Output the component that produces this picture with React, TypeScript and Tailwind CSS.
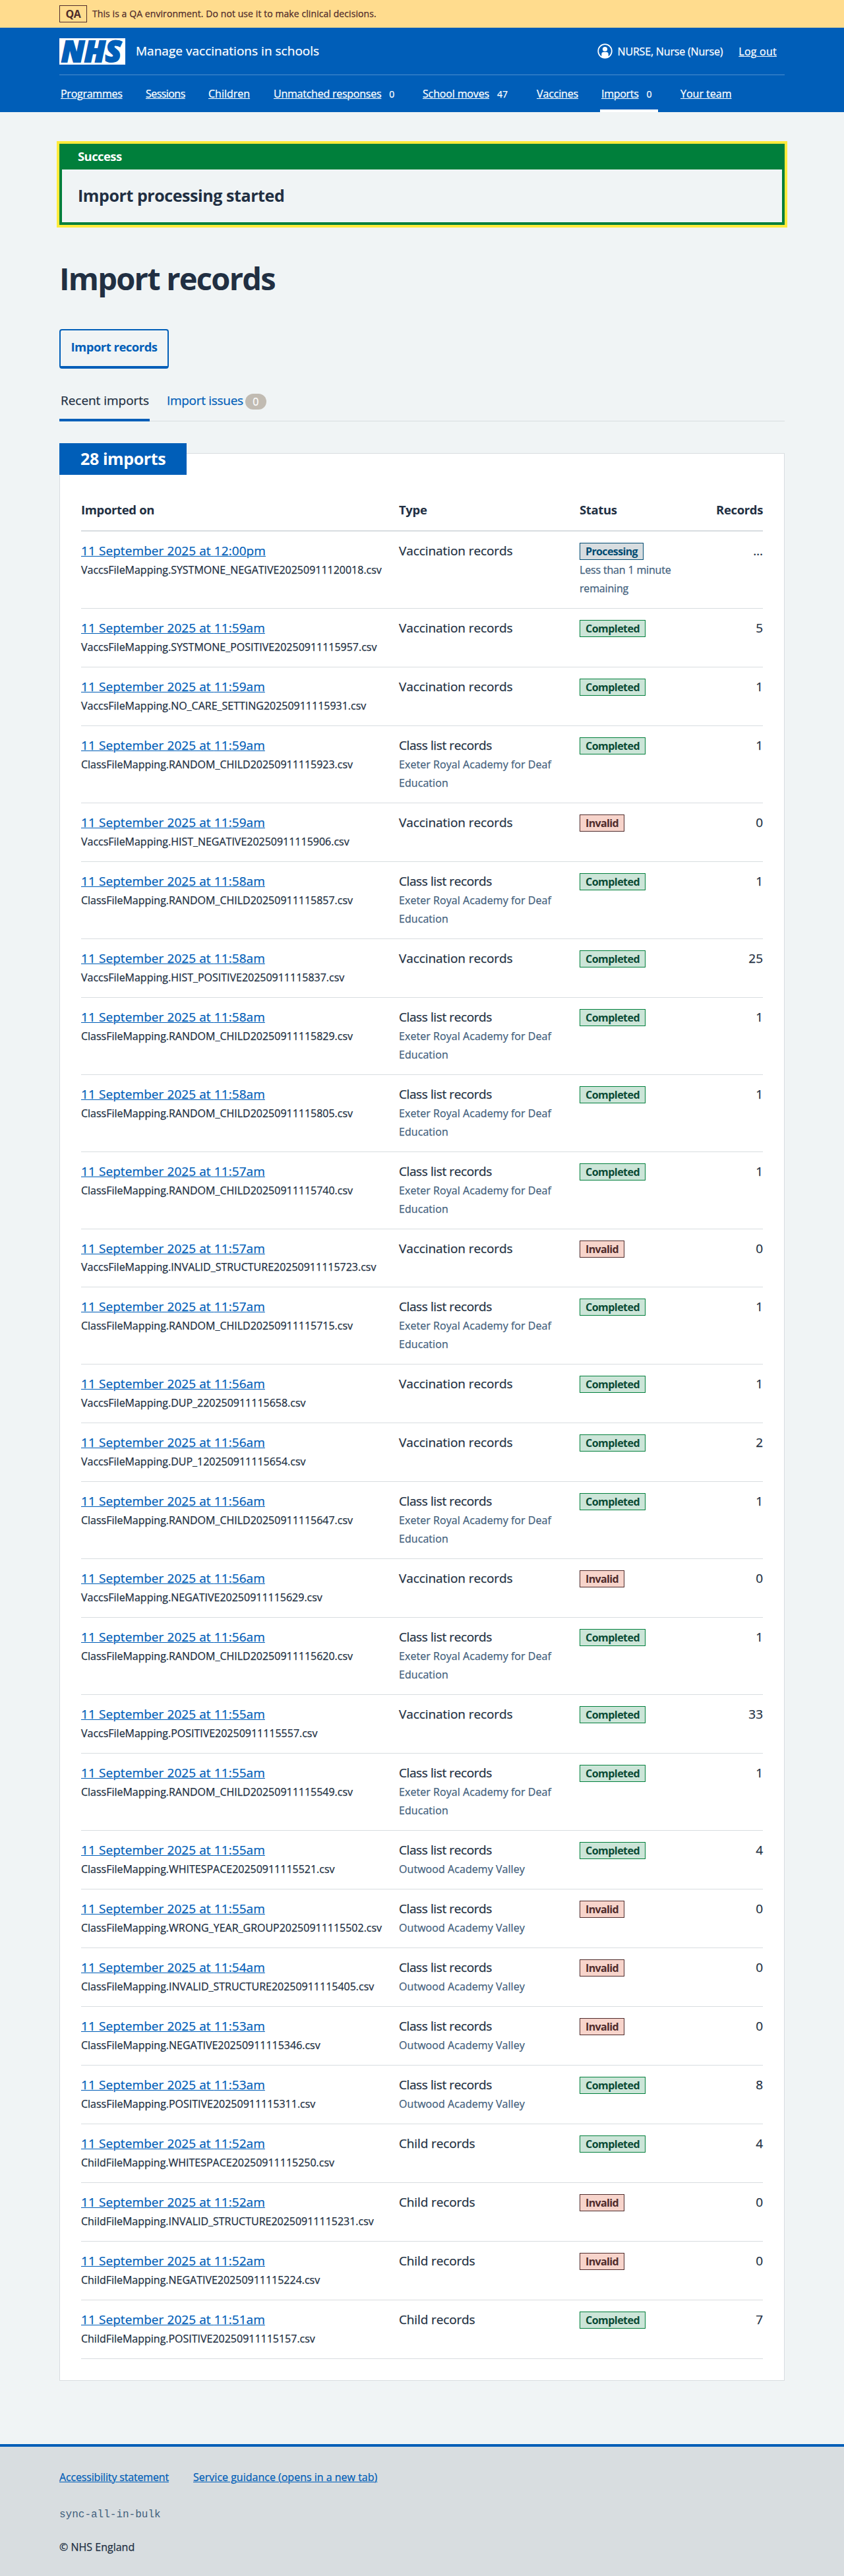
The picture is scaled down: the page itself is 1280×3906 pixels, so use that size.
type Status = "Processing" | "Completed" | "Invalid";
type Row = { time: string; file: string; type: string; school?: string; status: Status; records: string };

const EXETER = "Exeter Royal Academy for Deaf Education";
const OUTWOOD = "Outwood Academy Valley";

const vaccination = (time: string, file: string, status: Status, records: string): Row => ({
  time, file: `VaccsFileMapping.${file}.csv`, type: "Vaccination records", status, records,
});
const classList = (time: string, file: string, school: string, status: Status, records: string): Row => ({
  time, file: `ClassFileMapping.${file}.csv`, type: "Class list records", school, status, records,
});
const child = (time: string, file: string, status: Status, records: string): Row => ({
  time, file: `ChildFileMapping.${file}.csv`, type: "Child records", status, records,
});

const rows: Row[] = [
  vaccination("12:00pm", "SYSTMONE_NEGATIVE20250911120018", "Processing", "…"),
  vaccination("11:59am", "SYSTMONE_POSITIVE20250911115957", "Completed", "5"),
  vaccination("11:59am", "NO_CARE_SETTING20250911115931", "Completed", "1"),
  classList("11:59am", "RANDOM_CHILD20250911115923", EXETER, "Completed", "1"),
  vaccination("11:59am", "HIST_NEGATIVE20250911115906", "Invalid", "0"),
  classList("11:58am", "RANDOM_CHILD20250911115857", EXETER, "Completed", "1"),
  vaccination("11:58am", "HIST_POSITIVE20250911115837", "Completed", "25"),
  classList("11:58am", "RANDOM_CHILD20250911115829", EXETER, "Completed", "1"),
  classList("11:58am", "RANDOM_CHILD20250911115805", EXETER, "Completed", "1"),
  classList("11:57am", "RANDOM_CHILD20250911115740", EXETER, "Completed", "1"),
  vaccination("11:57am", "INVALID_STRUCTURE20250911115723", "Invalid", "0"),
  classList("11:57am", "RANDOM_CHILD20250911115715", EXETER, "Completed", "1"),
  vaccination("11:56am", "DUP_220250911115658", "Completed", "1"),
  vaccination("11:56am", "DUP_120250911115654", "Completed", "2"),
  classList("11:56am", "RANDOM_CHILD20250911115647", EXETER, "Completed", "1"),
  vaccination("11:56am", "NEGATIVE20250911115629", "Invalid", "0"),
  classList("11:56am", "RANDOM_CHILD20250911115620", EXETER, "Completed", "1"),
  vaccination("11:55am", "POSITIVE20250911115557", "Completed", "33"),
  classList("11:55am", "RANDOM_CHILD20250911115549", EXETER, "Completed", "1"),
  classList("11:55am", "WHITESPACE20250911115521", OUTWOOD, "Completed", "4"),
  classList("11:55am", "WRONG_YEAR_GROUP20250911115502", OUTWOOD, "Invalid", "0"),
  classList("11:54am", "INVALID_STRUCTURE20250911115405", OUTWOOD, "Invalid", "0"),
  classList("11:53am", "NEGATIVE20250911115346", OUTWOOD, "Invalid", "0"),
  classList("11:53am", "POSITIVE20250911115311", OUTWOOD, "Completed", "8"),
  child("11:52am", "WHITESPACE20250911115250", "Completed", "4"),
  child("11:52am", "INVALID_STRUCTURE20250911115231", "Invalid", "0"),
  child("11:52am", "NEGATIVE20250911115224", "Invalid", "0"),
  child("11:51am", "POSITIVE20250911115157", "Completed", "7"),
];

const tagStyles: Record<Status, string> = {
  Processing: "w-[97px] tracking-[-0.62px] bg-[#d8dde0] border-[#004b72] text-[#004b72]",
  Completed: "w-[100px] tracking-[-0.53px] bg-[#cce5d8] border-[#007f3b] text-[#0a4a35]",
  Invalid: "w-[68px] tracking-[-0.65px] bg-[#f7d4cb] border-[#4f2b2b] text-[#4f2b2b]",
};

const typeTracking: Record<string, string> = {
  "Vaccination records": "tracking-[-0.08px]",
  "Class list records": "tracking-[-0.4px]",
  "Child records": "tracking-[-0.13px]",
};

const nav = [
  { label: "Programmes", box: "w-[129px]", text: "tracking-[-0.26px]" },
  { label: "Sessions", box: "w-[95px]", text: "tracking-[-0.55px]" },
  { label: "Children", box: "w-[99px]", text: "" },
  { label: "Unmatched responses", box: "w-[226px]", text: "tracking-[-0.24px]", count: "0" },
  { label: "School moves", box: "w-[173px]", text: "tracking-[-0.15px]", count: "47" },
  { label: "Vaccines", box: "w-[98px]", text: "tracking-[-0.15px]" },
  { label: "Imports", box: "w-[120px]", text: "tracking-[-0.3px]", count: "0", active: true },
  { label: "Your team", box: "", text: "" },
];

function NhsLogo() {
  return (
    <svg className="overflow-visible" width="100" height="40" viewBox="0 0 100 40" role="img" aria-label="NHS">
      <rect width="100" height="40" fill="#fff" />
      <text
        x="3"
        y="35.500"
        textLength="91"
        lengthAdjust="spacingAndGlyphs"
        fill="#005eb8"
        stroke="#005eb8"
        strokeWidth="2.2"
        fontFamily="'Open Sans', sans-serif"
        fontSize="44"
        fontWeight="800"
        fontStyle="italic"
      >
        NHS
      </text>
    </svg>
  );
}

function UserIcon() {
  return (
    <svg width="23" height="23" viewBox="0 0 23 23" aria-hidden="true">
      <circle cx="11.5" cy="11.5" r="10.3" fill="none" stroke="#fff" strokeWidth="1.7" />
      <circle cx="11.5" cy="8.5" r="3.6" fill="#fff" />
      <path d="M6.3 20V16a3 3 0 0 1 3-3h4.400a3 3 0 0 1 3 3v4a10.500 10.500 0 0 1-10.400 0z" fill="#fff" />
    </svg>
  );
}

function ImportRow({ row }: { row: Row }) {
  return (
    <div role="row" className="grid grid-cols-[482px_274px_176px_102px] border-b border-[#d8dde0] py-4">
      <div role="cell">
        <div className="mb-[1.96px] text-[19px] leading-[26px] tracking-[0.08px]">
          <a className="text-[#005eb8] underline decoration-1 underline-offset-1">11 September 2025 at {row.time}</a>
        </div>
        <div className="text-base leading-7 tracking-[-0.01px] whitespace-nowrap">{row.file}</div>
      </div>
      <div role="cell" className="pr-8">
        <div className={`mb-[1.96px] text-[19px] leading-[26px] ${typeTracking[row.type]}`}>{row.type}</div>
        {row.school && <div className="text-base leading-7 tracking-[0.06px] text-[#42607c]">{row.school}</div>}
      </div>
      <div role="cell" className="pr-8">
        <div className={`mt-px mb-[0.96px] h-[26px] border pl-2 text-base leading-6 font-bold [-webkit-text-stroke:0px] ${tagStyles[row.status]}`}>
          {row.status}
        </div>
        {row.status === "Processing" && (
          <div className="text-base leading-7 tracking-[-0.17px] text-[#42607c]">Less than 1 minute remaining</div>
        )}
      </div>
      <div role="cell" className="text-right text-[19px] leading-[26px]">{row.records}</div>
    </div>
  );
}

export default function App() {
  return (
    <div className="min-h-screen bg-[#f0f4f5] font-['Open_Sans',sans-serif] text-base text-[#212f42] [-webkit-text-stroke:0.25px]">
      <div className="h-[42px] bg-[#ffdc8e] text-[#4f2b2b]">
        <div className="mx-auto flex h-full w-[1100px] items-center">
          <div className="flex h-[26px] w-[42px] items-center justify-center border border-[#4f2b2b] text-base leading-6 font-bold tracking-[-0.3px] [-webkit-text-stroke:0px]">QA</div>
          <span className="ml-2 text-sm tracking-[0.08px]">This is a QA environment. Do not use it to make clinical decisions.</span>
        </div>
      </div>

      <header className="h-32 bg-[#005eb8] text-white">
        <div className="mx-auto flex h-[72px] w-[1100px] items-center border-b border-[#4c8ecd]">
          <NhsLogo />
          <span className="ml-4 text-[19px] tracking-[0.02px]">Manage vaccinations in schools</span>
          <div className="ml-auto flex items-center pr-3">
            <UserIcon />
            <span className="ml-2 tracking-[-0.17px]">NURSE, Nurse (Nurse)</span>
            <a className="ml-6 tracking-[0.25px] underline decoration-1 underline-offset-1">Log out</a>
          </div>
        </div>
        <nav className="mx-auto flex h-14 w-[1100px] pl-0.5">
          {nav.map((item) => (
            <div key={item.label} className={`h-full shrink-0 ${item.box}`}>
              <div
                className={`-ml-0.5 flex h-full w-fit items-center pl-0.5 whitespace-nowrap ${
                  item.active ? "border-b-4 border-white pt-1 pr-2.5" : ""
                }`}
              >
                <a className={`underline decoration-1 underline-offset-1 ${item.text}`}>{item.label}</a>
                {item.count && <span className="ml-3 pt-px text-sm leading-6">{item.count}</span>}
              </div>
            </div>
          ))}
        </nav>
      </header>

      <main className="mx-auto w-[1100px] pt-12">
        <section className="h-[123px] border-4 border-t-0 border-[#007f3b] outline-4 outline-[#ffeb3b]">
          <div className="flex h-[39px] items-center bg-[#007f3b] px-6 pb-0.5 text-[18.5px] leading-7 font-bold tracking-[-0.6px] text-white [-webkit-text-stroke:0px]">Success</div>
          <div className="flex h-20 items-center px-6 text-[25px] font-bold tracking-[-0.42px] [-webkit-text-stroke:0px]">Import processing started</div>
        </section>

        <h1 className="mt-[54px] text-[47px] leading-[54px] font-bold tracking-[-1.75px] [-webkit-text-stroke:0px]">Import records</h1>

        <a className="mt-[50px] flex h-[60px] w-[166px] items-center justify-center rounded border-2 border-b-4 border-[#005eb8] pb-1 text-[18.5px] font-bold tracking-[-0.52px] text-[#005eb8] [-webkit-text-stroke:0px]">
          Import records
        </a>

        <div className="mt-6 flex h-14 border-b border-[#d8dde0] text-[19px] leading-7">
          <div className="-mb-px h-14 w-[137px] border-b-4 border-[#005eb8] pt-2.5 pl-px text-center tracking-[-0.04px]">Recent imports</div>
          <div className="flex h-14 items-start pt-2.5 pl-[26px] text-[#005eb8]">
            <span className="tracking-[-0.3px]">Import issues</span>
            <span className="mt-1 ml-[3px] h-6 w-8 rounded-full bg-[#c1bbb2] text-center text-base leading-6 text-white">0</span>
          </div>
        </div>

        <section className="mt-12 border border-[#d8dde0] bg-white px-8 pb-8">
          <h2 className="-mt-4 -ml-[33px] h-12 w-[193px] bg-[#005eb8] pl-8 text-[25px] leading-[46px] font-bold tracking-[-0.4px] text-white [-webkit-text-stroke:0px]">
            28 imports
          </h2>
          <div role="table">
            <div role="row" className="mt-[39px] grid h-[47px] grid-cols-[482px_274px_176px_102px] border-b-2 border-[#d8dde0] text-[18.5px] leading-7 font-bold tracking-[-0.35px] [-webkit-text-stroke:0px]">
              <div role="columnheader">Imported on</div>
              <div role="columnheader">Type</div>
              <div role="columnheader">Status</div>
              <div role="columnheader" className="text-right">Records</div>
            </div>
            {rows.map((row) => (
              <ImportRow key={row.file} row={row} />
            ))}
          </div>
        </section>
      </main>

      <footer className="mt-24 h-[200px] border-t-4 border-[#005eb8] bg-[#d8dde0]">
        <div className="mx-auto w-[1100px] pt-8">
          <div className="flex gap-[37px] leading-7 text-[#005eb8]">
            <a className="tracking-[-0.16px] underline decoration-1 underline-offset-1">Accessibility statement</a>
            <a className="underline decoration-1 underline-offset-1">Service guidance (opens in a new tab)</a>
          </div>
          <p className="mt-[29px] font-['Liberation_Mono',monospace] leading-7 text-[#42607c] [-webkit-text-stroke:0px]">sync-all-in-bulk</p>
          <p className="mt-[21px] leading-7">© NHS England</p>
        </div>
      </footer>
    </div>
  );
}
